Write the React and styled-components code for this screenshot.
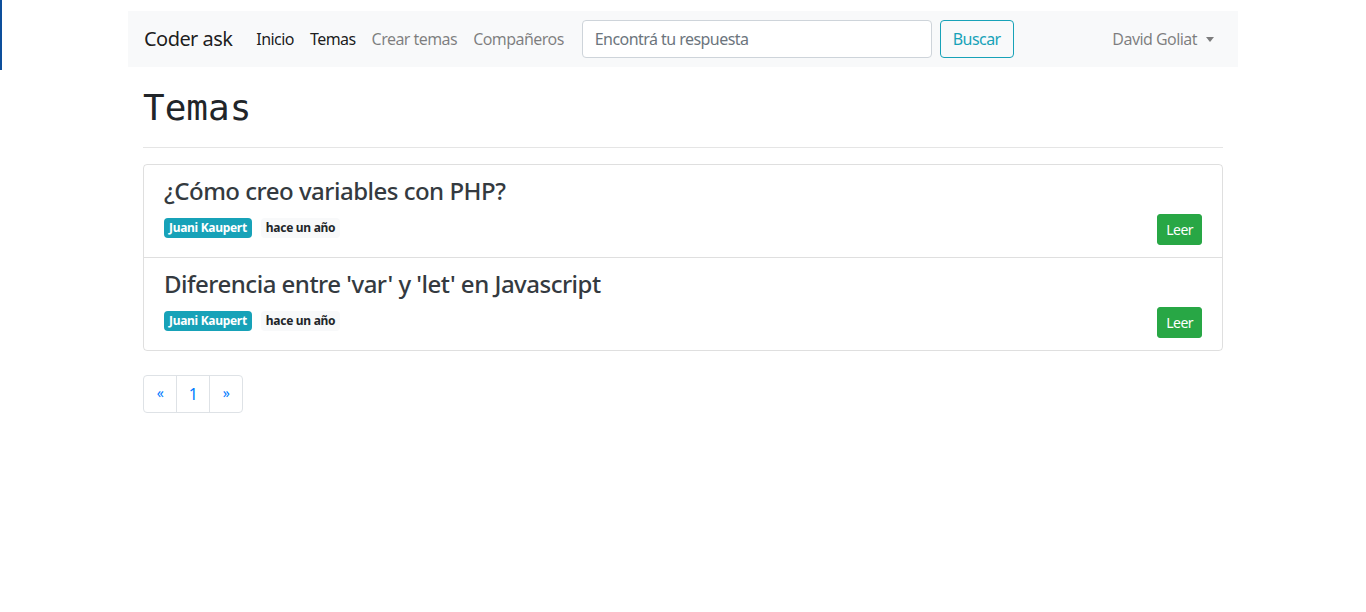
import React from 'react';
import styled, { createGlobalStyle } from 'styled-components';

const GlobalStyle = createGlobalStyle`
  * { box-sizing: border-box; }
  body {
    margin: 0;
    background: #fff;
    color: #212529;
    font-family: "Noto Sans", "Open Sans", sans-serif;
    font-size: 16px;
    line-height: 1.5;
    letter-spacing: -0.55px;
  }
`;

const EdgeMark = styled.div`
  position: fixed;
  left: 0;
  top: 0;
  width: 2px;
  height: 70px;
  background: #0d4f9c;
`;

const Page = styled.div`
  width: 1110px;
  margin: 0 auto;
  padding-top: 11px;
`;

const Navbar = styled.nav`
  display: flex;
  align-items: center;
  height: 56px;
  padding: 8px 16px;
  background: #f8f9fa;
`;

const Brand = styled.a`
  font-size: 20px;
  color: rgba(0, 0, 0, 0.9);
  margin-right: 16px;
  white-space: nowrap;
`;

const NavList = styled.ul`
  display: flex;
  list-style: none;
  margin: 0;
  padding: 0;
`;

const NavLink = styled.a`
  display: block;
  padding: 8px;
  font-size: 16px;
  color: ${p => (p.$active ? 'rgba(0, 0, 0, 0.9)' : 'rgba(0, 0, 0, 0.5)')};
  white-space: nowrap;
`;

const SearchForm = styled.form`
  display: flex;
  align-items: center;
  margin-left: 10px;
`;

const SearchInput = styled.input`
  width: 350px;
  height: 38px;
  padding: 6px 12px;
  border: 1px solid #ced4da;
  border-radius: 4px;
  font-family: inherit;
  font-size: 16px;
  letter-spacing: inherit;
  color: #495057;
  &::placeholder { color: #6c757d; }
`;

const OutlineButton = styled.button`
  margin-left: 8px;
  height: 38px;
  padding: 6px 12px;
  border: 1px solid #17a2b8;
  border-radius: 4px;
  background: transparent;
  color: #17a2b8;
  font-family: inherit;
  font-size: 16px;
  letter-spacing: inherit;
`;

const UserMenu = styled.a`
  margin-left: auto;
  display: flex;
  align-items: center;
  padding: 8px;
  color: rgba(0, 0, 0, 0.5);
  font-size: 16px;
  &::after {
    content: '';
    margin-left: 9px;
    border-top: 5px solid;
    border-left: 4.5px solid transparent;
    border-right: 4.5px solid transparent;
  }
`;

const Main = styled.main`
  padding: 0 15px;
`;

const Title = styled.h1`
  margin: 19px 0 0;
  font-family: "DejaVu Sans Mono", "Liberation Mono", monospace;
  font-weight: 400;
  font-size: 36px;
  line-height: 1.2;
  letter-spacing: 0;
  color: #212529;
`;

const Divider = styled.hr`
  margin: 18px 0 16px;
  border: 0;
  border-top: 1px solid rgba(0, 0, 0, 0.1);
`;

const TopicList = styled.div`
  border: 1px solid rgba(0, 0, 0, 0.125);
  border-radius: 4px;
`;

const TopicItem = styled.div`
  padding: 12px 20px;
  & + & { border-top: 1px solid rgba(0, 0, 0, 0.125); }
`;

const TopicTitle = styled.h4`
  margin: 0 0 8px;
  font-size: 24px;
  font-weight: 500;
  line-height: 1.2;
  letter-spacing: -0.5px;
  color: #343a40;
`;

const TopicMeta = styled.div`
  display: flex;
  justify-content: space-between;
  align-items: flex-start;
`;

const Badges = styled.div`
  display: flex;
  gap: 9px;
  margin-top: 4px;
`;

const Badge = styled.span`
  display: inline-block;
  padding: 3.5px 5px;
  font-size: 12px;
  font-weight: 700;
  line-height: 1.1;
  letter-spacing: -0.3px;
  border-radius: 4px;
  background: ${p => (p.$light ? '#f8f9fa' : '#17a2b8')};
  color: ${p => (p.$light ? '#212529' : '#fff')};
`;

const ReadButton = styled.button`
  padding: 4px 8px;
  border: 1px solid #28a745;
  border-radius: 3px;
  background: #28a745;
  color: #fff;
  font-family: inherit;
  font-size: 14px;
  letter-spacing: inherit;
  line-height: 1.5;
`;

const Pagination = styled.ul`
  display: inline-flex;
  list-style: none;
  margin: 24px 0 0;
  padding: 0;
`;

const PageLink = styled.li`
  padding: 8px 11px;
  line-height: 1.25;
  font-size: ${p => (p.$arrow ? '14px' : '16px')};
  min-width: 34px;
  text-align: center;
  color: #007bff;
  border: 1px solid #dee2e6;
  margin-left: -1px;
  &:first-child { margin-left: 0; border-radius: 4px 0 0 4px; }
  &:last-child { border-radius: 0 4px 4px 0; }
`;

const topics = [
  { title: '¿Cómo creo variables con PHP?', author: 'Juani Kaupert', when: 'hace un año' },
  { title: "Diferencia entre 'var' y 'let' en Javascript", author: 'Juani Kaupert', when: 'hace un año' },
];

const App = () => (
  <>
    <GlobalStyle />
    <EdgeMark />
    <Page>
      <Navbar>
        <Brand>Coder ask</Brand>
        <NavList>
          <li><NavLink $active>Inicio</NavLink></li>
          <li><NavLink $active>Temas</NavLink></li>
          <li><NavLink>Crear temas</NavLink></li>
          <li><NavLink>Compañeros</NavLink></li>
        </NavList>
        <SearchForm onSubmit={e => e.preventDefault()}>
          <SearchInput placeholder="Encontrá tu respuesta" />
          <OutlineButton type="submit">Buscar</OutlineButton>
        </SearchForm>
        <UserMenu>David Goliat</UserMenu>
      </Navbar>
      <Main>
        <Title>Temas</Title>
        <Divider />
        <TopicList>
          {topics.map(t => (
            <TopicItem key={t.title}>
              <TopicTitle>{t.title}</TopicTitle>
              <TopicMeta>
                <Badges>
                  <Badge>{t.author}</Badge>
                  <Badge $light>{t.when}</Badge>
                </Badges>
                <ReadButton>Leer</ReadButton>
              </TopicMeta>
            </TopicItem>
          ))}
        </TopicList>
        <Pagination>
          <PageLink $arrow>«</PageLink>
          <PageLink>1</PageLink>
          <PageLink $arrow>»</PageLink>
        </Pagination>
      </Main>
    </Page>
  </>
);

export default App;
